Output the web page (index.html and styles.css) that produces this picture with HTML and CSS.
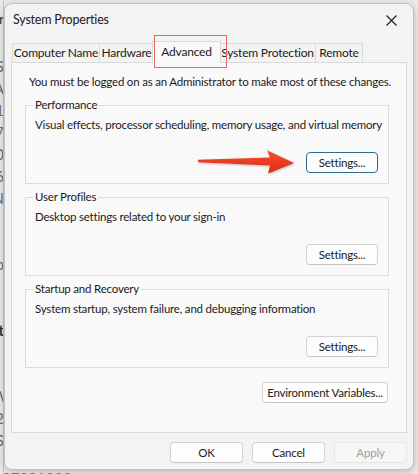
FILE: index.html
```html
<!DOCTYPE html>
<html lang="en">
<head>
  <meta charset="UTF-8">
  <meta name="viewport" content="width=device-width, initial-scale=1.0">
  <title>System Properties</title>
  <link rel="stylesheet" href="styles.css">
</head>
<body>

  <div class="desktop">
    <!-- Window behind the dialog (only its edge shows) -->
    <div class="behind">
      <div class="behind-line l-title">r</div>
      <div class="behind-line">S</div>
      <div class="behind-line">A</div>
      <div class="behind-line">1</div>
      <div class="behind-line">7</div>
      <div class="behind-line">0</div>
      <div class="behind-line">6</div>
      <div class="behind-line">N</div>
      <div class="behind-line gap">o</div>
      <div class="behind-line gap bold">t</div>
      <div class="behind-line gap">W</div>
      <div class="behind-line">2</div>
      <div class="behind-line">S</div>
    </div>

    <!-- Dialog -->
    <div class="dialog">
      <div class="titlebar">
        <span class="title">System Properties</span>
        <svg class="close" width="11" height="11" viewBox="0 0 11 11">
          <path d="M0.5 0.5 L10.5 10.5 M10.5 0.5 L0.5 10.5" stroke="#1b1b1b" stroke-width="1.1" fill="none"/>
        </svg>
      </div>

      <div class="tabs">
        <div class="tab tab-name">Computer Name</div>
        <div class="tab tab-hw">Hardware</div>
        <div class="tab tab-adv active">Advanced<span class="highlight"></span></div>
        <div class="tab tab-sp">System Protection</div>
        <div class="tab tab-remote">Remote</div>
      </div>

      <div class="panel">
        <p class="note">You must be logged on as an Administrator to make most of these changes.</p>

        <fieldset class="group">
          <legend>Performance</legend>
          <p>Visual effects, processor scheduling, memory usage, and virtual memory</p>
          <div class="group-actions">
            <button class="btn focused">Settings...</button>
          </div>
          <svg class="arrow" width="100" height="26" viewBox="0 0 100 26">
            <defs>
              <linearGradient id="arrowFill" x1="0" y1="0" x2="0" y2="1">
                <stop offset="0" stop-color="#f5502e"/>
                <stop offset="1" stop-color="#dc2a14"/>
              </linearGradient>
            </defs>
            <path d="M2 10.8 L74 8.6 L71 1.2 L98 14 L72 24.6 L74 16.6 L2 13.2 Z" fill="url(#arrowFill)"/>
          </svg>
        </fieldset>

        <fieldset class="group">
          <legend>User Profiles</legend>
          <p>Desktop settings related to your sign-in</p>
          <div class="group-actions">
            <button class="btn">Settings...</button>
          </div>
        </fieldset>

        <fieldset class="group">
          <legend>Startup and Recovery</legend>
          <p>System startup, system failure, and debugging information</p>
          <div class="group-actions">
            <button class="btn">Settings...</button>
          </div>
        </fieldset>

        <div class="env-row">
          <button class="btn btn-env">Environment Variables...</button>
        </div>
      </div>

      <div class="footer">
        <button class="btn btn-footer">OK</button>
        <button class="btn btn-footer">Cancel</button>
        <button class="btn btn-footer" disabled>Apply</button>
      </div>
    </div>
  </div>

  <div class="behind-bottom">27821333</div>

</body>
</html>
```

FILE: styles.css
```css
/* Global */
body {
  margin: 0;
  padding: 0;
  background-color: #ebebeb;
  font-family: 'Lato', 'Liberation Sans', sans-serif;
  font-size: 11.5px;
  letter-spacing: -0.2px;
  color: #1b1b1b;
  overflow: hidden;
  height: 474px;
  white-space: nowrap;
}

.desktop {
  display: flex;
  align-items: flex-start;
}

/* Edge of the window behind */
.behind {
  width: 4px;
  overflow: hidden;
  border-right: 1px solid #c9c9c9;
  height: 474px;
  box-sizing: border-box;
  padding-top: 11px;
  color: #6b6b6b;
  font-size: 15px;
  letter-spacing: 0;
}

.behind-line {
  width: 12px;
  margin-left: -8px;
  text-align: right;
  height: 22px;
  line-height: 22px;
}

.behind-line.l-title {
  height: 44px;
  line-height: 16px;
  color: #333;
  font-size: 14px;
}

.behind-line.gap {
  margin-top: 44px;
}

.behind-line.bold {
  font-weight: bold;
  color: #333;
}

.behind-bottom {
  margin-top: -4px;
  padding-left: 2px;
  color: #777;
  font-size: 15px;
  line-height: 16px;
  letter-spacing: 0;
}

/* Dialog window */
.dialog {
  width: 410px;
  height: 467px;
  margin-top: 3px;
  box-sizing: border-box;
  background-color: #f3f3f3;
  border: 1px solid #c2c2c2;
  border-radius: 8px;
  box-shadow: 0 2px 8px rgba(0, 0, 0, 0.22);
  padding: 0 6px;
  display: flex;
  flex-direction: column;
}

.titlebar {
  height: 37px;
  display: flex;
  justify-content: space-between;
  align-items: flex-start;
  padding: 8px 10px 0 2px;
  box-sizing: border-box;
}

.title {
  font-size: 12.5px;
  line-height: 16px;
}

.close {
  margin-top: 3px;
}

/* Tabs */
.tabs {
  display: flex;
  height: 21px;
  padding-left: 1px;
  position: relative;
  z-index: 1;
}

.tab {
  box-sizing: border-box;
  height: 19px;
  margin-top: 2px;
  border: 1px solid #dadada;
  border-bottom: none;
  margin-left: -1px;
  background-color: #f3f3f3;
  text-align: center;
  line-height: 18px;
  font-size: 12px;
}

.tab:first-child {
  margin-left: 0;
}

.tab-name { width: 88px; }
.tab-hw { width: 55px; }
.tab-sp { width: 97px; }
.tab-remote { width: 48px; }

.tab.active {
  width: 69px;
  height: 22px;
  margin-top: 0;
  margin-left: -2px;
  margin-right: -1px;
  background-color: #f9f9f9;
  line-height: 19px;
  position: relative;
}

/* Red box drawn around the active tab */
.highlight {
  position: absolute;
  left: 1px;
  top: -7px;
  width: 73px;
  height: 33px;
  box-sizing: border-box;
  border: 1.5px solid #e06a5c;
}

/* Tab panel */
.panel {
  height: 371px;
  box-sizing: border-box;
  background-color: #f9f9f9;
  border: 1px solid #dadada;
  padding: 11px 17px 0 13px;
}

.note {
  margin: 0 0 8px 4px;
  line-height: 16px;
}

/* Group boxes */
.group {
  position: relative;
  margin: 0 0 6px 0;
  border: 1px solid #dcdcdc;
  padding: 5px 10px 10px 9px;
  min-width: 0;
}

.group legend {
  padding: 0 2px;
  margin-left: -2px;
  line-height: 14px;
}

.group p {
  margin: 0;
  line-height: 16px;
}

.group-actions {
  display: flex;
  justify-content: flex-end;
  margin-top: 19px;
}

.arrow {
  position: absolute;
  left: 170px;
  top: 37px;
  filter: drop-shadow(1px 1px 1px rgba(0, 0, 0, 0.25));
}

/* Buttons */
.btn {
  font-family: inherit;
  font-size: 11.5px;
  letter-spacing: -0.2px;
  color: #1b1b1b;
  background-color: #fdfdfd;
  border: 1px solid #d3d3d3;
  border-bottom-color: #c4c4c4;
  border-radius: 4px;
  height: 21px;
  width: 72px;
  padding: 0;
  line-height: 18px;
  white-space: nowrap;
}

.btn.focused {
  border: 1px solid #2f6a86;
}

.btn:disabled {
  color: #a0a0a0;
  background-color: #f6f6f6;
  border-color: #e6e6e6;
}

.env-row {
  display: flex;
  justify-content: flex-end;
  margin-top: 14px;
  padding-right: 1px;
}

.btn-env {
  width: 126px;
}

/* Dialog buttons */
.footer {
  display: flex;
  justify-content: flex-end;
  gap: 9px;
  margin-top: 9px;
}

.btn-footer {
  width: 73px;
}
```
